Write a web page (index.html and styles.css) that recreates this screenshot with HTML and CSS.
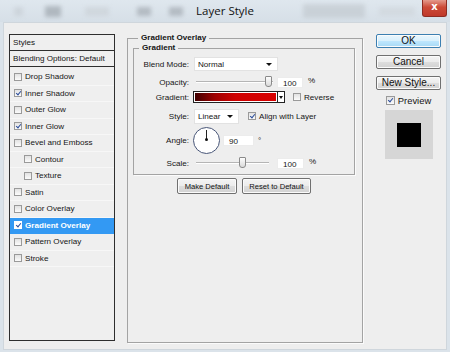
FILE: index.html
```html
<!DOCTYPE html>
<html lang="en">
<head>
    <meta charset="UTF-8">
    <title>Layer Style</title>
    <link rel="stylesheet" href="styles.css">
</head>
<body>
    <div class="window">
        <!-- barra de titulo -->
        <div class="titlebar">
            <div class="ghost">
                <span class="g g1"></span>
                <span class="g g2"></span>
                <span class="g g3"></span>
                <span class="g g4"></span>
                <span class="g g5"></span>
                <span class="g g6"></span>
                <span class="g g7"></span>
            </div>
            <span class="title">Layer Style</span>
            <span class="close">x</span>
        </div>

        <div class="dialog">
            <!-- lista de estilos -->
            <div class="styles-list">
                <div class="head">Styles</div>
                <div class="head">Blending Options: Default</div>
                <div class="items">
                    <div class="item"><span class="cb"></span>Drop Shadow</div>
                    <div class="item"><span class="cb on"></span>Inner Shadow</div>
                    <div class="item"><span class="cb"></span>Outer Glow</div>
                    <div class="item"><span class="cb on"></span>Inner Glow</div>
                    <div class="item"><span class="cb"></span>Bevel and Emboss</div>
                    <div class="item sub"><span class="cb"></span>Contour</div>
                    <div class="item sub"><span class="cb"></span>Texture</div>
                    <div class="item"><span class="cb"></span>Satin</div>
                    <div class="item"><span class="cb"></span>Color Overlay</div>
                    <div class="item active"><span class="cb on"></span>Gradient Overlay</div>
                    <div class="item"><span class="cb"></span>Pattern Overlay</div>
                    <div class="item"><span class="cb"></span>Stroke</div>
                </div>
            </div>

            <!-- painel principal -->
            <div class="main">
                <fieldset class="group outer">
                    <legend>Gradient Overlay</legend>
                    <fieldset class="group inner">
                        <legend>Gradient</legend>

                        <div class="row r1">
                            <span class="label">Blend Mode:</span>
                            <span class="select wide">Normal<span class="arrow"></span></span>
                        </div>
                        <div class="row r2">
                            <span class="label">Opacity:</span>
                            <span class="slider s-opacity"><span class="thumb"></span></span>
                            <span class="field">100</span>
                            <span class="unit">%</span>
                        </div>
                        <div class="row r3">
                            <span class="label">Gradient:</span>
                            <span class="swatch"></span>
                            <span class="swatch-arrow"><span class="arrow"></span></span>
                            <span class="cb gap-l"></span>
                            <span>Reverse</span>
                        </div>
                        <div class="row r4">
                            <span class="label">Style:</span>
                            <span class="select narrow">Linear<span class="arrow"></span></span>
                            <span class="cb on gap-s"></span>
                            <span>Align with Layer</span>
                        </div>
                        <div class="row r5">
                            <span class="label">Angle:</span>
                            <span class="dial"><span class="hand"></span></span>
                            <span class="field angle">90</span>
                            <span class="unit deg">&deg;</span>
                        </div>
                        <div class="row r6">
                            <span class="label">Scale:</span>
                            <span class="slider s-scale"><span class="thumb"></span></span>
                            <span class="field">100</span>
                            <span class="unit">%</span>
                        </div>
                    </fieldset>

                    <div class="defaults">
                        <button class="btn small">Make Default</button>
                        <button class="btn small">Reset to Default</button>
                    </div>
                </fieldset>
            </div>

            <!-- botoes laterais -->
            <div class="side">
                <button class="btn big ok">OK</button>
                <button class="btn big">Cancel</button>
                <button class="btn big">New Style...</button>
                <div class="preview-check"><span class="cb on"></span>Preview</div>
                <div class="preview"><span class="square"></span></div>
            </div>
        </div>
    </div>
</body>
</html>
```

FILE: styles.css
```css
body {
    margin: 0;
    width: 450px;
    height: 352px;
    overflow: hidden;
    font-family: "Liberation Sans", Arial, sans-serif;
    font-size: 8.1px;
    color: #151515;
    background: #dbe3ea;
}
.window {
    height: 352px;
    display: flex;
    flex-direction: column;
}

/* barra de titulo */
.titlebar {
    height: 22px;
    display: grid;
    grid-template-columns: 1fr auto 1fr;
    align-items: start;
    background: linear-gradient(#dfe7ee, #d6dfe7);
    overflow: hidden;
}
.ghost {
    grid-area: 1 / 1 / 2 / 4;
    height: 22px;
    display: flex;
    align-items: center;
    filter: blur(2px);
    opacity: 0.55;
}
.g {
    display: block;
    height: 9px;
    background: #a9b1b8;
}
.g1 { width: 9px; margin-left: 14px; background: #c3cad0; }
.g2 { width: 16px; margin-left: 22px; height: 11px; background: #8e969d; }
.g3 { width: 24px; margin-left: 24px; background: #c8ced3; }
.g4 { width: 14px; margin-left: 28px; background: #959ca3; }
.g5 { width: 14px; margin-left: 18px; background: #959ca3; }
.g6 { width: 62px; margin-left: 120px; height: 14px; background: #bcc3c9; }
.g7 { width: 36px; margin-left: 14px; background: #cdd3d8; }
.title {
    grid-area: 1 / 2;
    position: relative;
    font-family: "Open Sans", sans-serif;
    font-size: 11.5px;
    line-height: 22px;
    color: #111;
}
.close {
    grid-area: 1 / 3;
    justify-self: end;
    position: relative;
    width: 25px;
    height: 17px;
    margin-right: 3px;
    background: linear-gradient(#e49a8c, #cc4a37 45%, #c0392a);
    border: 1px solid #8e2c22;
    border-top: none;
    border-radius: 0 0 3px 3px;
    box-sizing: border-box;
    color: #fff;
    font-family: "DejaVu Sans", sans-serif;
    font-weight: bold;
    font-size: 10px;
    line-height: 14px;
    text-align: center;
}

/* area do dialogo */
.dialog {
    flex: 1;
    margin: 0 3px 2px;
    background: #eeeeee;
    border: 1px solid #cfd6dc;
    display: flex;
    align-items: flex-start;
    padding: 11px 0 0 5px;
}

/* lista de estilos */
.styles-list {
    width: 106px;
    height: 307px;
    box-sizing: border-box;
    border: 1px solid #2e2e2e;
    background: #efefef;
}
.head {
    height: 16px;
    line-height: 15px;
    padding-left: 3px;
    border-bottom: 1px solid #2e2e2e;
    box-sizing: border-box;
}
.items {
    padding-top: 2px;
}
.item {
    height: 16.5px;
    display: flex;
    align-items: center;
    padding-left: 4px;
    border-bottom: 1px solid #f7f7f7;
    box-sizing: border-box;
}
.item .cb {
    margin-right: 3px;
}
.item.sub {
    padding-left: 14px;
}
.item.active {
    background: #3399f3;
    color: #fff;
    font-weight: bold;
    border-bottom-color: #3399f3;
}

/* checkbox */
.cb {
    display: inline-block;
    position: relative;
    width: 8px;
    height: 8px;
    box-sizing: border-box;
    border: 1px solid #9a9a9a;
    background: linear-gradient(#e2e2e2, #fbfbfb);
    flex: none;
}
.cb.on::after {
    content: "";
    position: absolute;
    left: 2px;
    top: 0;
    width: 2px;
    height: 4px;
    border: solid #2b4d9b;
    border-width: 0 1.5px 1.5px 0;
    transform: rotate(40deg);
}
.item.active .cb {
    border-color: #fff;
    background: #fff;
}

/* painel principal */
.main {
    margin-left: 12px;
    width: 236px;
}
.group {
    margin: 0;
    border: 1px solid #a3a3a3;
    box-shadow: 1px 1px 0 #fbfbfb;
    min-width: 0;
}
.group legend {
    font-weight: bold;
    padding: 0 3px;
    margin-left: 5px;
    line-height: 10px;
}
.outer {
    height: 310px;
    box-sizing: border-box;
    padding: 0 7px 0 5px;
    margin-top: -1px;
}
.inner {
    height: 132px;
    box-sizing: border-box;
    padding: 4px 0 0 0;
}

.row {
    display: flex;
    align-items: center;
    height: 14px;
}
.r2 { margin-top: 4px; }
.r3 { margin-top: 1px; }
.r4 { margin-top: 5px; }
.r5 { margin-top: 3px; height: 28px; }
.r6 { margin-top: 2px; }
.label {
    width: 55px;
    text-align: right;
    margin-right: 4px;
    flex: none;
}
.select {
    position: relative;
    height: 14px;
    line-height: 14px;
    box-sizing: border-box;
    padding-left: 3px;
    background: #fff;
    border: 1px solid #e2e2e2;
}
.select.wide { width: 84px; margin-left: 1px; }
.select.narrow { width: 45px; margin-left: 1px; height: 15px; }
.select .arrow {
    position: absolute;
    right: 5px;
    top: 5px;
}
.arrow {
    display: block;
    width: 0;
    height: 0;
    border-left: 3px solid transparent;
    border-right: 3px solid transparent;
    border-top: 3px solid #111;
}
.slider {
    position: relative;
    height: 2px;
    margin-left: 3px;
    border-top: 1px solid #b5b5b5;
    border-bottom: 1px solid #fff;
    box-sizing: border-box;
}
.s-opacity { width: 77px; }
.s-scale { width: 73px; }
.thumb {
    position: absolute;
    top: -6px;
    width: 5px;
    height: 9px;
    border: 1px solid #8a8a8a;
    border-radius: 1px 1px 3px 3px;
    background: linear-gradient(#fdfdfd, #dadada);
}
.s-opacity .thumb { right: 1px; }
.s-scale .thumb { left: 43px; }
.field {
    width: 26px;
    height: 11px;
    line-height: 11px;
    padding-left: 5px;
    box-sizing: border-box;
    background: #fff;
    border: 1px solid #ececec;
    margin-left: 4px;
}
.s-opacity + .field { margin-left: 4px; }
.s-scale + .field { margin-left: 8px; width: 27px; }
.unit {
    margin-left: 5px;
    align-self: flex-start;
    margin-top: 1px;
}
.unit.deg {
    margin-top: 10px;
    margin-left: 4px;
}
.swatch {
    width: 85px;
    height: 12px;
    box-sizing: border-box;
    border: 1px solid #222;
    box-shadow: inset 0 0 0 1px #fff;
    background: linear-gradient(to right, #3c0000, #9e0000 25%, #cf0000 50%, #d80000);
}
.swatch-arrow {
    width: 7px;
    height: 12px;
    box-sizing: border-box;
    border: 1px solid #222;
    border-left: none;
    background: #fff;
    display: flex;
    align-items: center;
    justify-content: center;
}
.swatch-arrow .arrow {
    border-width: 3px 2px 0;
}
.gap-l { margin: 0 3px 0 8px; }
.gap-s { margin: 0 3px 0 9px; }
.dial {
    position: relative;
    width: 27px;
    height: 27px;
    box-sizing: border-box;
    border: 1.5px solid #485678;
    border-radius: 50%;
    background: #fff;
    flex: none;
}
.hand {
    position: absolute;
    left: 11.5px;
    top: 2px;
    width: 1px;
    height: 10px;
    background: #222;
}
.hand::after {
    content: "";
    position: absolute;
    left: -1px;
    bottom: -1.5px;
    width: 3px;
    height: 3px;
    border-radius: 50%;
    background: #111;
}
.field.angle {
    width: 31px;
    margin-left: 3px;
}

/* botoes */
.btn {
    display: block;
    font-family: "Liberation Sans", Arial, sans-serif;
    color: #111;
    border: 1px solid #707070;
    border-radius: 2px;
    background: linear-gradient(#f4f4f4 0%, #ececec 48%, #dddddd 52%, #d2d2d2 100%);
    box-shadow: inset 0 0 0 1px #fbfbfb;
    padding: 0;
    cursor: pointer;
}
.defaults {
    display: flex;
    justify-content: center;
    gap: 5px;
    margin-top: 3px;
}
.btn.small {
    height: 16px;
    font-size: 7.6px;
}
.defaults .btn:first-child { width: 60px; }
.defaults .btn:last-child { width: 69px; }

.side {
    margin-left: 13px;
    width: 65px;
    display: flex;
    flex-direction: column;
    align-items: center;
}
.btn.big {
    width: 65px;
    height: 14px;
    font-size: 10px;
    line-height: 12px;
    margin-bottom: 7px;
}
.btn.ok {
    border-color: #3c7fb1;
    background: linear-gradient(#eaf6fd 0%, #d9f0fc 48%, #bee6fd 52%, #a7d9f5 100%);
}
.preview-check {
    display: flex;
    align-items: center;
    font-size: 9.4px;
    margin-top: -2px;
}
.preview-check .cb {
    width: 9px;
    height: 9px;
    margin-right: 3px;
}
.preview {
    width: 48px;
    height: 49px;
    margin-top: 4px;
    background: #d6d6d6;
    display: flex;
    align-items: center;
    justify-content: center;
}
.square {
    width: 24px;
    height: 24px;
    background: #000;
}
```
